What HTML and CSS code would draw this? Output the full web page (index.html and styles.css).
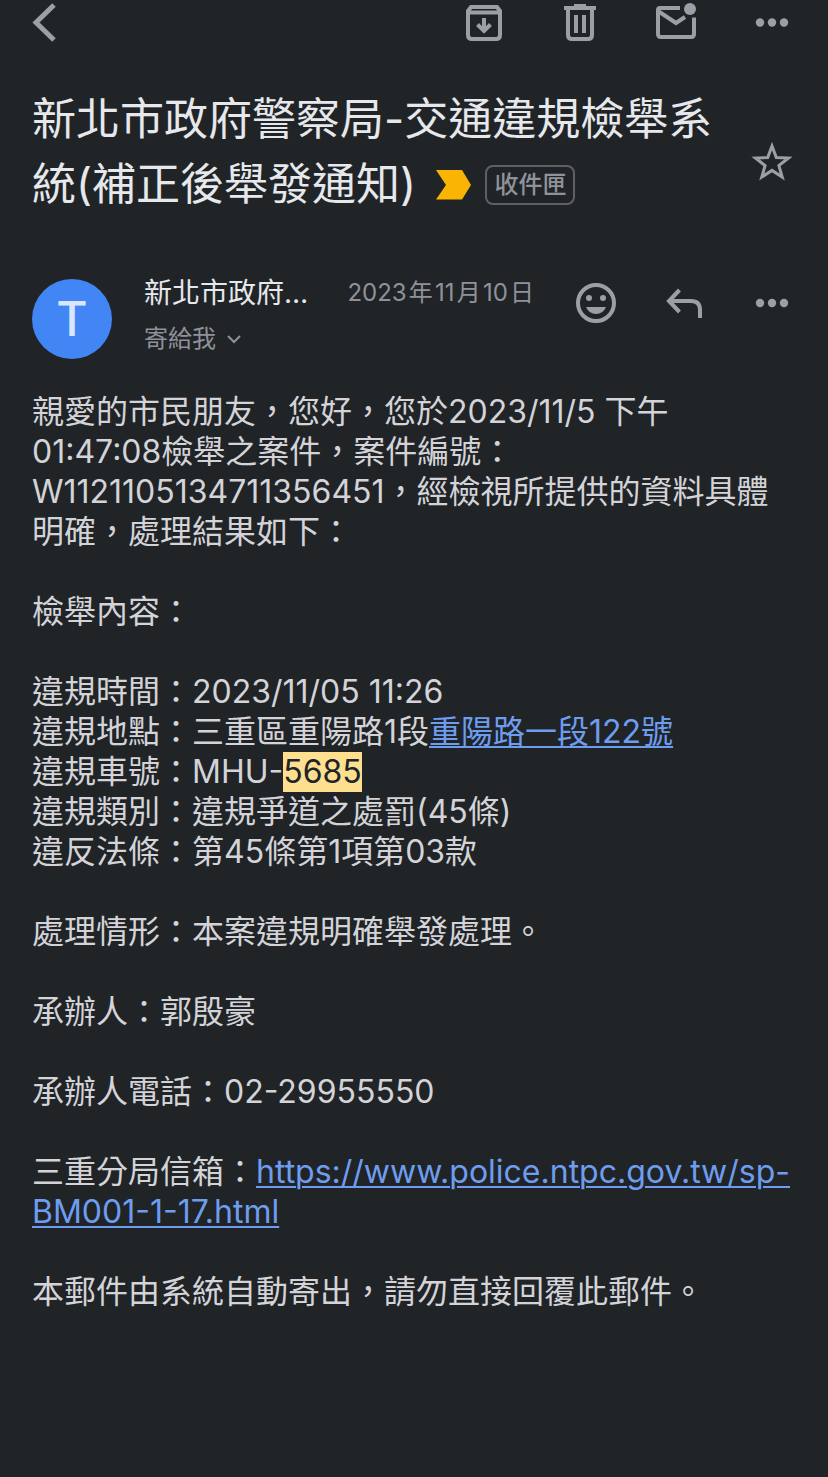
FILE: index.html
```
<!DOCTYPE html>
<html lang="zh-Hant">
<head>
    <meta charset="UTF-8">
    <meta name="viewport" content="width=device-width, initial-scale=1">
    <title>新北市政府警察局-交通違規檢舉系統</title>
    <link rel="stylesheet" href="styles.css">
</head>
<body>
    <header class="toolbar">
        <button class="icon-btn back" aria-label="返回">
            <svg width="48" height="44" viewBox="0 0 48 44"><path d="M22 5 4 22.500 22 40" fill="none" stroke="currentColor" stroke-width="5"/></svg>
        </button>
        <button class="icon-btn" aria-label="封存">
            <svg width="48" height="44" viewBox="0 0 48 44" fill="none" stroke="currentColor" stroke-width="4">
                <path d="M8 12.500V11l3-4h26l3 4v24q0 4-4 4H12q-4 0-4-4V12.500h32"/>
                <path d="M24 18v12M17.500 24.500 24 31l6.500-6.500"/>
            </svg>
        </button>
        <button class="icon-btn" aria-label="刪除">
            <svg width="48" height="44" viewBox="0 0 48 44" fill="none" stroke="currentColor" stroke-width="4">
                <path d="M8 8h32M18 6h12M12 8v27q0 4 4 4h16q4 0 4-4V8M20 15v18M28 15v18"/>
            </svg>
        </button>
        <button class="icon-btn" aria-label="標示為未讀">
            <svg width="48" height="44" viewBox="0 0 48 44" fill="none" stroke="currentColor" stroke-width="4">
                <path d="M28 8H8q-2 0-2 2v24q0 3 3 3h30q3 0 3-3V17.500"/>
                <path d="m6 11 18 12 9-6"/>
                <circle cx="38" cy="9" r="6" fill="currentColor" stroke="none"/>
            </svg>
        </button>
        <button class="icon-btn" aria-label="更多">
            <svg width="48" height="44" viewBox="0 0 48 44" fill="currentColor"><circle cx="12" cy="22.500" r="4.200"/><circle cx="24" cy="22.500" r="4.200"/><circle cx="36" cy="22.500" r="4.200"/></svg>
        </button>
    </header>

    <main>
        <section class="subject">
            <h1>新北市政府警察局-交通違規檢舉系統(補正後舉發通知)
                <span class="labels">
                    <svg width="36" height="30" viewBox="0 0 36 30"><path d="M0 0h26l9 15-9 14.500H0L10 15z" fill="#f9b404"/></svg>
                    <span class="chip">收件匣</span>
                </span>
            </h1>
            <button class="icon-btn star" aria-label="加上星號">
                <svg width="48" height="44" viewBox="0 0 48 44"><path d="m24 7 4.300 11.500 12.200.500-9.600 7.600L34.200 38 24 31.400 13.800 38l3.300-11.400L7.500 19l12.200-.500z" fill="none" stroke="currentColor" stroke-width="3"/></svg>
            </button>
        </section>

        <section class="sender">
            <div class="avatar">T</div>
            <div class="from">
                <div class="line">
                    <span class="name">新北市政府警察局</span>
                    <time datetime="2023-11-10">2023&hairsp;年&hairsp;11&hairsp;月&hairsp;10&hairsp;日</time>
                </div>
                <button class="to">寄給我
                    <svg width="14" height="10" viewBox="0 0 14 10"><path d="m1 2 6 6 6-6" fill="none" stroke="currentColor" stroke-width="2"/></svg>
                </button>
            </div>
            <div class="actions">
                <button class="icon-btn" aria-label="新增表情符號回應">
                    <svg width="48" height="44" viewBox="0 0 48 44" fill="currentColor">
                        <circle cx="24" cy="22" r="18" fill="none" stroke="currentColor" stroke-width="4"/>
                        <circle cx="17" cy="17" r="3"/><circle cx="31" cy="17" r="3"/>
                        <path d="M14 26h20q-3 7-10 7t-10-7z"/>
                    </svg>
                </button>
                <button class="icon-btn" aria-label="回覆">
                    <svg width="48" height="44" viewBox="0 0 48 44" fill="none" stroke="currentColor" stroke-width="4"><path d="M19.500 9 9 20l10.500 11M9 20h22q9 0 9 9v8"/></svg>
                </button>
                <button class="icon-btn" aria-label="更多">
                    <svg width="48" height="44" viewBox="0 0 48 44" fill="currentColor"><circle cx="12" cy="22" r="4.200"/><circle cx="24" cy="22" r="4.200"/><circle cx="36" cy="22" r="4.200"/></svg>
                </button>
            </div>
        </section>

        <article class="mail">
            <p>親愛的市民朋友，您好，您於2023/11/5 下午 01:47:08檢舉之案件，案件編號：W1121105134711356451，經檢視所提供的資料具體明確，處理結果如下：</p>
            <p>檢舉內容：</p>
            <p>
                違規時間：2023/11/05 11:26<br>
                違規地點：三重區重陽路1段<a href="#">重陽路一段122號</a><br>
                違規車號：MHU-<mark>5685</mark><br>
                違規類別：違規爭道之處罰(45條)<br>
                違反法條：第45條第1項第03款
            </p>
            <p>處理情形：本案違規明確舉發處理。</p>
            <p>承辦人：郭殷豪</p>
            <p>承辦人電話：02-29955550</p>
            <p>三重分局信箱：<a href="https://www.police.ntpc.gov.tw/sp-BM001-1-17.html">https://www.police.ntpc.gov.tw/sp-BM001-1-17.html</a></p>
            <p>本郵件由系統自動寄出，請勿直接回覆此郵件。</p>
        </article>
    </main>
</body>
</html>
```
FILE: styles.css
```
* {
    box-sizing: border-box;
}
body {
    margin: 0;
    min-height: 100vh;
    background-color: #202427;
    color: #d3d3d8;
    font-family: Inter, "Noto Sans CJK TC", sans-serif;
}
button {
    padding: 0;
    border: 0;
    background: none;
    color: #9d9fa7;
    font: inherit;
    cursor: pointer;
}
svg {
    display: block;
}
.icon-btn {
    flex: none;
    width: 48px;
    height: 44px;
}
.toolbar {
    display: flex;
    gap: 48px;
    padding: 0 32px;
}
.back {
    margin-right: auto;
}
.subject {
    display: flex;
    align-items: center;
    gap: 16px;
    padding: 43px 32px 0;
}
.subject h1 {
    flex: 1;
    margin: 0;
    color: #e6e8ec;
    font-size: 44px;
    font-weight: 400;
    line-height: 65px;
}
.labels {
    display: inline-flex;
    align-items: center;
    gap: 13px;
    margin-bottom: 6px;
    margin-left: 8px;
    vertical-align: middle;
}
.chip {
    height: 40px;
    padding: 0 7px;
    border: 2px solid #5d6068;
    border-radius: 8px;
    color: #8f929a;
    font-size: 24px;
    font-weight: 500;
    line-height: 36px;
}
.star {
    margin-top: 18px;
}
.sender {
    display: flex;
    align-items: flex-start;
    padding: 59px 32px 0;
}
.avatar {
    flex: none;
    width: 80px;
    height: 80px;
    margin-top: 3px;
    border-radius: 50%;
    background-color: #4285f4;
    color: #d9e6fd;
    font-size: 48px;
    font-weight: 500;
    line-height: 80px;
    text-align: center;
}
.from {
    flex: 1;
    min-width: 0;
    margin-left: 32px;
}
.line {
    display: flex;
    align-items: center;
    gap: 24px;
    line-height: 34px;
}
.name {
    flex: 1;
    min-width: 0;
    overflow: hidden;
    color: #e6e8ec;
    font-size: 28px;
    text-overflow: ellipsis;
    white-space: nowrap;
}
time {
    color: #8f929a;
    font-size: 24px;
    white-space: nowrap;
}
.to {
    display: flex;
    align-items: center;
    gap: 11px;
    margin-top: 12px;
    color: #8f929a;
    font-size: 24px;
    line-height: 34px;
}
.actions {
    display: flex;
    gap: 40px;
    margin: 5px 0 0 38px;
}
.mail {
    padding: 33px 32px 100px;
    font-size: 32px;
    line-height: 40px;
}
.mail p {
    margin: 0 0 40px;
    overflow-wrap: break-word;
}
.mail a {
    color: #6e9df0;
    text-decoration-thickness: 2px;
    text-underline-offset: 3px;
}
mark {
    display: inline-block;
    background-color: #fedf90;
    color: #202427;
}
```
